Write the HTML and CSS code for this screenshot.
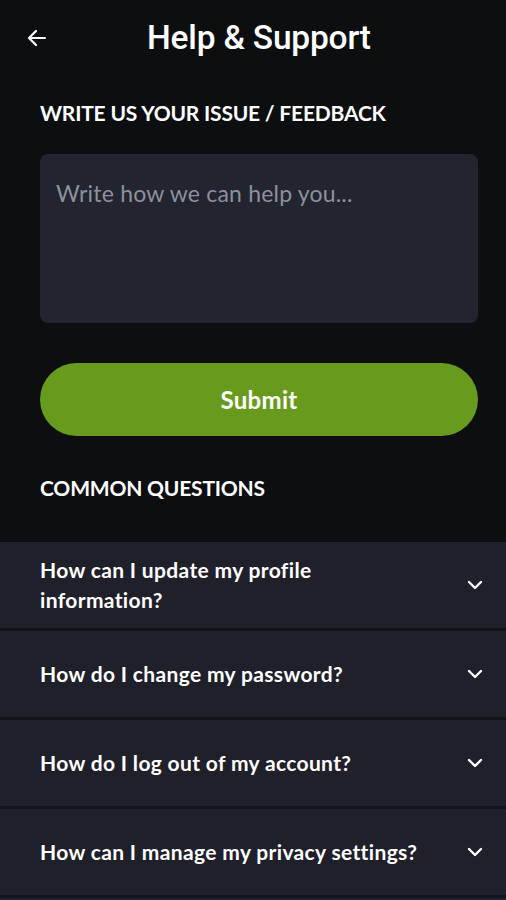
FILE: index.html
```html
<!DOCTYPE html>
<html lang="en">
<head>
<meta charset="utf-8">
<title>Help &amp; Support</title>
<link rel="stylesheet" href="styles.css">
</head>
<body>
<div class="screen">
  <header class="topbar">
    <button class="back" aria-label="Back">
      <svg width="24" height="24" viewBox="0 0 24 24"><path d="M20 12H5M11 5l-7 7 7 7" fill="none" stroke="#fff" stroke-width="2.2" stroke-linecap="round" stroke-linejoin="round"/></svg>
    </button>
    <h1 class="title">Help &amp; Support</h1>
  </header>

  <section class="form">
    <h2 class="label">WRITE US YOUR ISSUE / FEEDBACK</h2>
    <textarea class="input" placeholder="Write how we can help you..."></textarea>
    <button class="submit">Submit</button>
    <h2 class="label label-faq">COMMON QUESTIONS</h2>
  </section>

  <ul class="faq">
    <li class="faq-item"><span class="q">How can I update my profile information?</span><svg class="chev" width="18" height="12" viewBox="0 0 18 12"><path d="M3 3l6 6 6-6" fill="none" stroke="#fff" stroke-width="2.4" stroke-linecap="round" stroke-linejoin="round"/></svg></li>
    <li class="faq-item"><span class="q">How do I change my password?</span><svg class="chev" width="18" height="12" viewBox="0 0 18 12"><path d="M3 3l6 6 6-6" fill="none" stroke="#fff" stroke-width="2.4" stroke-linecap="round" stroke-linejoin="round"/></svg></li>
    <li class="faq-item"><span class="q">How do I log out of my account?</span><svg class="chev" width="18" height="12" viewBox="0 0 18 12"><path d="M3 3l6 6 6-6" fill="none" stroke="#fff" stroke-width="2.4" stroke-linecap="round" stroke-linejoin="round"/></svg></li>
    <li class="faq-item"><span class="q">How can I manage my privacy settings?</span><svg class="chev" width="18" height="12" viewBox="0 0 18 12"><path d="M3 3l6 6 6-6" fill="none" stroke="#fff" stroke-width="2.4" stroke-linecap="round" stroke-linejoin="round"/></svg></li>
    <li class="faq-item faq-more" aria-hidden="true"></li>
  </ul>
</div>
</body>
</html>
```

FILE: styles.css
```css
* { box-sizing: border-box; }
html, body { margin: 0; padding: 0; }
body {
  background: #0d0e10;
  color: #fff;
  font-family: "Lato", "Noto Sans", sans-serif;
  width: 506px;
  height: 900px;
  overflow: hidden;
}
.screen { display: flex; flex-direction: column; }
.topbar {
  display: flex;
  align-items: center;
  height: 76px;
  padding: 0 0 0 24px;
}
.back {
  background: none;
  border: 0;
  padding: 0;
  width: 26px;
  height: 26px;
  display: flex;
  align-items: center;
  justify-content: center;
}
.title {
  margin: 0 0 0 97px;
  font-family: "Roboto", sans-serif;
  font-weight: 500;
  font-size: 33.5px;
  letter-spacing: -0.2px;
  line-height: 1;
}
.form {
  display: flex;
  flex-direction: column;
  padding: 0 28px 0 40px;
}
.label {
  margin: 25px 0 0;
  font-size: 21px;
  font-weight: 700;
  line-height: 24px;
  letter-spacing: -0.2px;
}
.input {
  margin-top: 29px;
  height: 169px;
  border: 0;
  border-radius: 8px;
  background: #22242f;
  resize: none;
  padding: 25px 16px;
  font-family: "Lato", sans-serif;
  font-size: 23px;
  letter-spacing: 0.2px;
  color: #fff;
  outline: none;
}
.input::placeholder { color: #8d909d; }
.submit {
  margin-top: 40px;
  height: 73px;
  border: 0;
  border-radius: 37px;
  background: #689b1d;
  color: #fff;
  font-family: "Lato", sans-serif;
  font-weight: 700;
  font-size: 24px;
  letter-spacing: 0.3px;
}
.label-faq { margin-top: 40px; }
.faq {
  list-style: none;
  margin: 42px 0 0;
  padding: 0;
  display: flex;
  flex-direction: column;
  gap: 3px;
  background: #14151b;
}
.faq-item {
  display: flex;
  align-items: center;
  justify-content: space-between;
  min-height: 86px;
  padding: 12px 22px 12px 40px;
  background: #1f202a;
}
.q {
  font-size: 21px;
  font-weight: 700;
  line-height: 30px;
  letter-spacing: 0.35px;
  max-width: 330px;
}
.faq-item:nth-child(n+2) .q { max-width: 410px; }
.chev { flex: none; }
```
